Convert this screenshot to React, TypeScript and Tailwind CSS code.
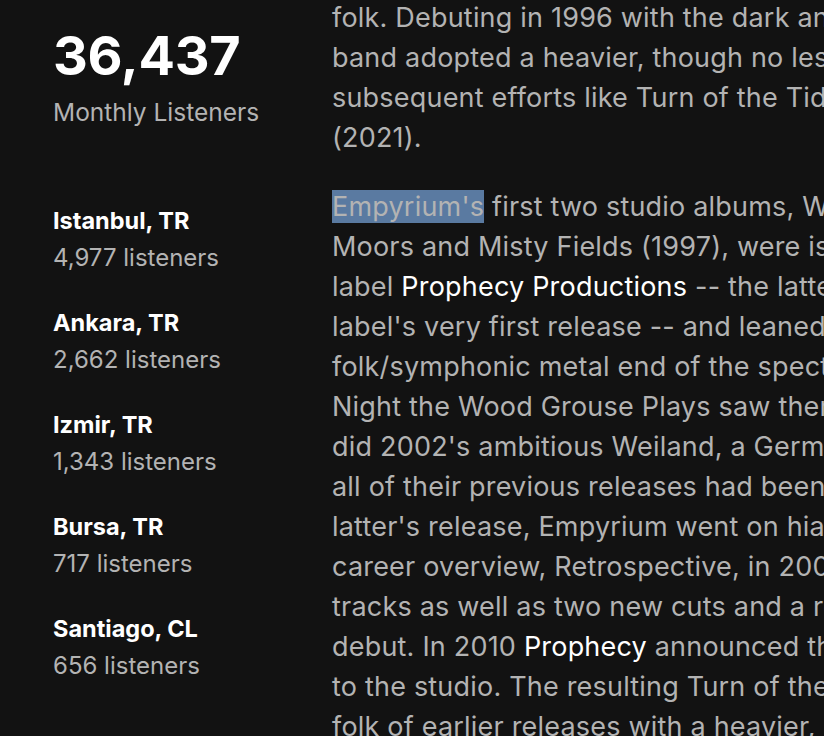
import React from "react";

const cities = [
  { name: "Istanbul, TR", count: "4,977" },
  { name: "Ankara, TR", count: "2,662" },
  { name: "Izmir, TR", count: "1,343" },
  { name: "Bursa, TR", count: "717" },
  { name: "Santiago, CL", count: "656" },
];

type Seg = string | { link: string } | { sel: string };

const para1: Seg[][] = [
  ["folk. Debuting in 1996 with the dark and brooding A Wintersunset..., the"],
  ["band adopted a heavier, though no less melancholy sound on"],
  ["subsequent efforts like Turn of the Tides (2014) and Über den Sternen"],
  ["(2021)."],
];

const para2: Seg[][] = [
  [{ sel: "Empyrium's" }, " first two studio albums, Where at Night the Wood Grouse"],
  ["Moors and Misty Fields (1997), were issued by German"],
  ["label ", { link: "Prophecy Productions" }, " -- the latter was the"],
  ["label's very first release -- and leaned heavily toward the"],
  ["folk/symphonic metal end of the spectrum. 1999's Where at"],
  ["Night the Wood Grouse Plays saw them embrace a more"],
  ["did 2002's ambitious Weiland, a German-language concept album."],
  ["all of their previous releases had been reissued. Following the"],
  ["latter's release, Empyrium went on hiatus, releasing a"],
  ["career overview, Retrospective, in 2006, which featured rare"],
  ["tracks as well as two new cuts and a re-recorded track from their"],
  ["debut. In 2010 ", { link: "Prophecy" }, " announced that the band had returned"],
  ["to the studio. The resulting Turn of the Tides combined the"],
  ["folk of earlier releases with a heavier, more doom-laden sound."],
];

function Line({ segs }: { segs: Seg[] }) {
  return (
    <div className="h-[40px] whitespace-nowrap">
      {segs.map((s, i) =>
        typeof s === "string" ? (
          <span key={i}>{s}</span>
        ) : "link" in s ? (
          <span key={i} className="text-white">
            {s.link}
          </span>
        ) : (
          <span key={i} className="bg-[#5a7aa1]">
            {s.sel}
          </span>
        )
      )}
    </div>
  );
}

export default function App() {
  return (
    <div
      className="h-[736px] w-[824px] overflow-hidden bg-[#121212] text-white"
      style={{ fontFamily: "Inter, 'Noto Sans', sans-serif" }}
    >
      <div className="flex">
        {/* 左カラム：リスナー統計 */}
        <div className="w-[332px] shrink-0 pl-[53px] pt-[23px]">
          <div className="text-[54px] font-bold leading-[66px] tracking-[-0.3px]">36,437</div>
          <div className="mt-[6px] text-[24.5px] leading-[34px] text-[#b3b3b3]">Monthly Listeners</div>
          <div className="mt-[77px] flex flex-col gap-[34px]">
            {cities.map((c) => (
              <div key={c.name}>
                <div className="text-[23.5px] font-bold leading-[30px]">{c.name}</div>
                <div className="mt-[6px] text-[24px] leading-[32px] text-[#b3b3b3]">{c.count} listeners</div>
              </div>
            ))}
          </div>
        </div>

        {/* 右カラム：バイオグラフィ */}
        <div className="-mt-[2px] min-w-0 flex-1 text-[27px] leading-[40px] tracking-[0.2px] text-[#b3b3b3]">
          <div>
            {para1.map((l, i) => (
              <Line key={i} segs={l} />
            ))}
          </div>
          <div className="mt-[29px]">
            {para2.map((l, i) => (
              <Line key={i} segs={l} />
            ))}
          </div>
        </div>
      </div>
    </div>
  );
}
